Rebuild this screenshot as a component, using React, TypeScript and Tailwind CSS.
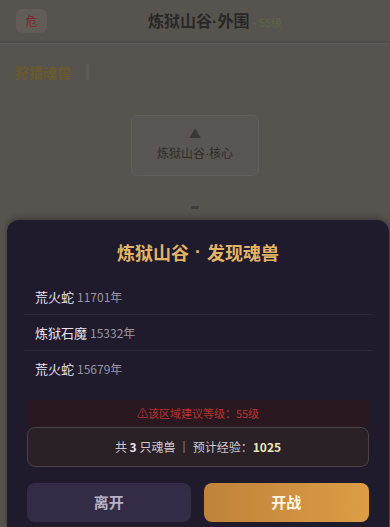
import React from "react";

const beasts = [
  { name: "荒火蛇", age: "11701年" },
  { name: "炼狱石魔", age: "15332年" },
  { name: "荒火蛇", age: "15679年" },
];

const font = { fontFamily: '"Noto Sans CJK SC", "Noto Sans", sans-serif' };

const Dot = ({ wide }: { wide?: boolean }) => (
  <span className={`font-['Liberation_Sans'] ${wide ? "mx-[6px]" : ""}`}>·</span>
);

export default function App() {
  return (
    <div className="relative w-[390px] h-[527px] overflow-hidden bg-[#57534f]" style={font}>
      {/* dimmed page behind */}
      <div className="flex flex-col">
        <div className="h-[41px] flex items-center relative px-[16px]">
          <div className="w-[31px] h-[24px] rounded-md bg-[#615c58] flex items-center justify-center text-[12px] text-[#7e2832]">
            危
          </div>
          <div className="absolute left-0 right-0 flex justify-center items-baseline pointer-events-none">
            <span className="text-[16px] font-bold text-[#2a2826] ml-[40px]">
              炼狱山谷<Dot />外围
            </span>
            <span className="text-[11px] text-[#5a6642] ml-[3px]">- 55级</span>
          </div>
        </div>
        <div className="h-[2px] bg-[#4e4a47]" />
        <div className="h-[1px] bg-[#5f5b57]" />
        <div className="flex items-center h-[38px] mt-[9px] px-[15px]">
          <span className="text-[14px] font-bold text-[#6a5a2e]">狩猎魂兽</span>
          <span className="ml-[15px] w-[3px] h-[16px] bg-[#5f5b57]" />
        </div>
        <div className="flex flex-col items-center mt-[24px]">
          <div className="w-[128px] h-[61px] rounded-md border border-[#63605c] bg-[#5a5653] flex flex-col items-center justify-center gap-[4px]">
            <span className="text-[12px] leading-none text-[#3a3734]">▲</span>
            <span className="text-[12px] text-[#2e2c2a]">
              炼狱山谷<Dot />核心
            </span>
          </div>
          <span className="mt-[30px] w-[8px] h-[3px] rounded-full bg-[#3f3c39]" />
        </div>
      </div>

      {/* modal */}
      <div className="absolute left-[7px] top-[220px] w-[382px] bottom-0 rounded-t-[12px] bg-[#1f1a2c] px-[20px] pt-[20px] shadow-[0_-2px_6px_rgba(0,0,0,0.3)]">
        <h2 className="h-[24px] flex items-center justify-center text-[18px] font-bold text-[#e2b466]">
          炼狱山谷<Dot wide />发现魂兽
        </h2>
        <div className="mt-[15px] -mx-[3px]">
          {beasts.map((b, i) => (
            <div
              key={i}
              className={`h-[36px] flex items-center px-[11px] ${i < beasts.length - 1 ? "border-b border-[#2d2840]" : ""}`}
            >
              <span className="text-[13px] text-[#e6e2ee]">{b.name}</span>
              <span className="ml-[3px] text-[12px] text-[#9a94a8]">{b.age}</span>
            </div>
          ))}
        </div>
        <div className="mt-[13px] h-[27px] bg-[#2a1820] flex items-center justify-center text-[11px] text-[#b8332f]">
          ⚠该区域建议等级：55级
        </div>
        <div className="h-[40px] rounded-lg border border-[#4a4048] bg-[#2a2127] flex items-center justify-center text-[12px] text-[#cfc8cc]">
          <span>
            共 <b className="text-[#e8e0e6]">3</b> 只魂兽 ｜ 预计经验：<b className="text-[#f2e2b8]">1025</b>
          </span>
        </div>
        <div className="mt-[16px] flex gap-[13px]">
          <button className="w-[166px] h-[39px] rounded-lg bg-[#342c46] text-[15px] font-bold text-[#b8b0c4]">
            离开
          </button>
          <button className="w-[168px] h-[39px] rounded-lg bg-gradient-to-r from-[#bf833a] to-[#dc9d46] text-[15px] font-bold text-[#fff6e0]">
            开战
          </button>
        </div>
      </div>
    </div>
  );
}
